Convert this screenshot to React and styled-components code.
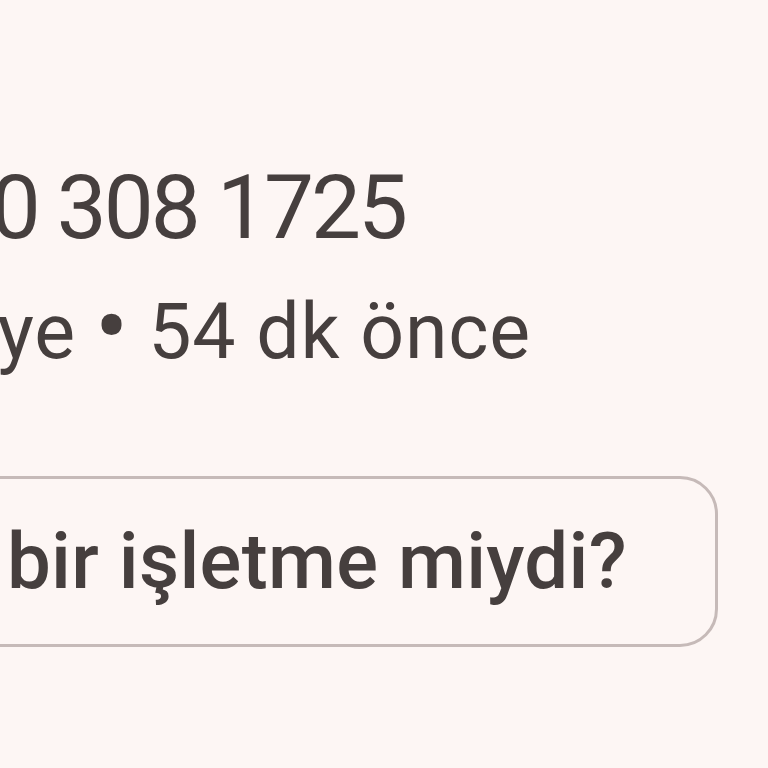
import React from 'react';
import styled, { createGlobalStyle } from 'styled-components';

const GlobalStyle = createGlobalStyle`
  html, body {
    margin: 0;
    padding: 0;
    background: #fdf6f4;
    overflow: hidden;
  }
  body {
    font-family: Roboto, "Noto Sans", sans-serif;
    color: #463f3e;
  }
`;

const Page = styled.main`
  width: 768px;
  height: 768px;
  padding-top: 158px;
  box-sizing: border-box;
  display: flex;
  flex-direction: column;
`;

// the text runs off the left edge, so each line is pinned by its right end
const Line = styled.div`
  display: flex;
  justify-content: flex-end;
  width: ${(p) => p.$end}px;
  white-space: nowrap;
`;

const Number = styled(Line)`
  font-size: 89px;
  line-height: 100px;
  font-weight: 400;
  letter-spacing: -3px;
`;

const Meta = styled(Line)`
  margin-top: 31px;
  font-size: 77px;
  line-height: 86px;
  font-weight: 400;
  letter-spacing: 0.8px;
`;

const Dot = styled.span`
  font-size: 1.3em;
  line-height: 0;
  margin: 0 -1px;
  position: relative;
  top: 3px;
`;

const AskButton = styled.button`
  margin-top: 101px;
  margin-left: -197px;
  width: 915px;
  height: 171px;
  box-sizing: border-box;
  display: flex;
  align-items: center;
  justify-content: center;
  background: transparent;
  border: 3px solid #c6bab8;
  border-radius: 38px;
  font-family: Roboto, "Noto Sans", sans-serif;
  font-size: 78px;
  line-height: 92px;
  font-weight: 500;
  letter-spacing: 0.3px;
  color: #463f3e;
  white-space: nowrap;
  padding: 0;
`;

export default function App() {
  return (
    <>
      <GlobalStyle />
      <Page>
        <Number $end={405}>
          <span>0530 308 1725</span>
        </Number>
        <Meta $end={531}>
          <span>
            Türkiye <Dot>•</Dot> 54 dk önce
          </span>
        </Meta>
        <AskButton>Bu bir işletme miydi?</AskButton>
      </Page>
    </>
  );
}
